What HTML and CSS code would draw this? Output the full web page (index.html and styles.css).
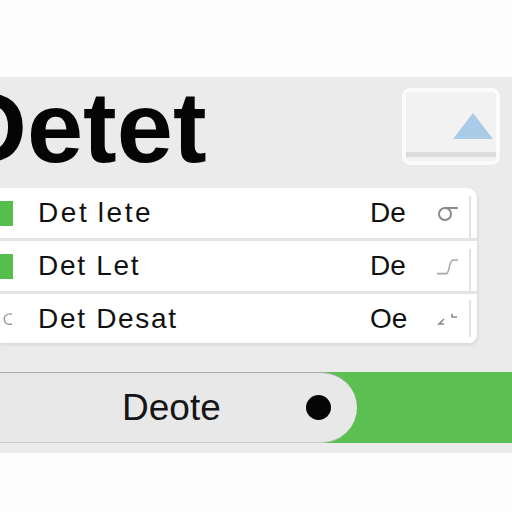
FILE: index.html
```html
<!DOCTYPE html>
<html>
<head>
<meta charset="utf-8">
<link rel="stylesheet" href="styles.css">
</head>
<body>
<div class="top"></div>
<main class="panel">
  <header class="header">
    <h1 class="title">Detet</h1>
    <div class="thumb">
      <svg width="90" height="69" viewBox="0 0 90 69">
        <rect x="0" y="0" width="90" height="69" fill="#f2f2f2"/>
        <polygon points="67,21 47,47 87,47" fill="#a9cbe8"/>
        <rect x="0" y="60" width="90" height="5" fill="#dcdcdc"/>
      </svg>
    </div>
  </header>
  <section class="card">
    <div class="row">
      <div class="lead"><span class="sq"></span></div>
      <div class="label wide">Det lete</div>
      <div class="val">De</div>
      <div class="ico">
        <svg width="22" height="20" viewBox="0 0 22 20"><circle cx="8" cy="11" r="6" fill="none" stroke="#8a8a8a" stroke-width="2"/><path d="M8 5 H21" stroke="#8a8a8a" stroke-width="2" fill="none"/></svg>
      </div>
      <div class="rail"></div>
    </div>
    <div class="row">
      <div class="lead"><span class="sq"></span></div>
      <div class="label">Det Let</div>
      <div class="val">De</div>
      <div class="ico">
        <svg width="26" height="22" viewBox="0 0 26 22"><path d="M0 20 H11 C15 20 14 4 19 4 H25" stroke="#a6a6a6" stroke-width="1.8" fill="none"/></svg>
      </div>
      <div class="rail"></div>
    </div>
    <div class="row">
      <div class="lead"><svg class="cmark" width="12" height="14" viewBox="0 0 12 14"><path d="M10 2 C3 1 1 6 3 10 C4 12 7 13 10 12" stroke="#9a9a9a" stroke-width="1.4" fill="none"/></svg></div>
      <div class="label">Det Desat</div>
      <div class="val">Oe</div>
      <div class="ico">
        <svg width="22" height="20" viewBox="0 0 22 20"><path d="M7 10 L2 15 H7" stroke="#8a8a8a" stroke-width="1.6" fill="none"/><path d="M15 5 V8 H20" stroke="#8a8a8a" stroke-width="1.6" fill="none"/></svg>
      </div>
      <div class="rail"></div>
    </div>
  </section>
  <div class="bar">
    <div class="pill">
      <span class="pill-text">Deote</span>
      <span class="dot"></span>
    </div>
  </div>
</main>
</body>
</html>
```
FILE: styles.css
```css
html, body {
  margin: 0;
  padding: 0;
  background: #fdfdfd;
  font-family: "Liberation Sans", Arial, sans-serif;
  overflow: hidden;
}
.top {
  height: 77px;
}
.panel {
  background: #ebebeb;
  height: 376px;
  display: flex;
  flex-direction: column;
}
.header {
  height: 111px;
  display: flex;
  justify-content: space-between;
  align-items: flex-start;
}
.title {
  margin: 0 0 0 -46px;
  font-size: 101px;
  line-height: 100px;
  font-weight: 700;
  color: #050505;
  letter-spacing: 0;
}
.thumb {
  margin-top: 11px;
  margin-right: 12px;
  border: 4px solid #fbfbfb;
  border-radius: 8px;
  width: 90px;
  height: 69px;
  overflow: hidden;
  box-shadow: 0 0 1px rgba(0,0,0,0.08);
}
.thumb svg { display: block; }
.card {
  margin-right: 35px;
  background: #fff;
  border-radius: 0 10px 8px 0;
  box-shadow: 1px 2px 3px rgba(0,0,0,0.08);
  display: flex;
  flex-direction: column;
}
.row {
  height: 50px;
  display: flex;
  align-items: center;
  border-bottom: 3px solid #e4e4e4;
  padding-right: 6px;
}
.row:last-child { border-bottom: none; height: 49px; }
.lead {
  width: 38px;
  display: flex;
  align-items: center;
}
.sq {
  width: 13px;
  height: 25px;
  background: #55bf4e;
}
.cmark { margin-left: 2px; }
.label {
  flex: 1;
  font-size: 28px;
  letter-spacing: 1.7px;
  color: #111;
}
.label.wide { word-spacing: -2px; letter-spacing: 2.6px; }
.val {
  width: 67px;
  font-size: 28px;
  color: #111;
}
.ico {
  width: 22px;
  display: flex;
  align-items: center;
}
.ico svg { display: block; }
.rail {
  margin-left: 10px;
  width: 2px;
  align-self: stretch;
  margin-top: 8px;
  background: #e2e2e2;
}
.row:last-child .rail { margin-top: 6px; margin-bottom: 6px; }
.bar {
  margin-top: 29px;
  height: 71px;
  background: #5bbf52;
  display: flex;
}
.pill {
  width: 357px;
  box-sizing: border-box;
  background: #e8e8e8;
  border-top: 1px solid #a9a9a9;
  border-bottom: 1px solid #c9c9c9;
  border-radius: 0 36px 36px 0;
  display: flex;
  align-items: center;
  padding-left: 122px;
}
.pill-text {
  font-size: 37px;
  color: #151515;
}
.dot {
  margin-left: 85px;
  width: 25px;
  height: 25px;
  border-radius: 50%;
  background: #050505;
}
```
